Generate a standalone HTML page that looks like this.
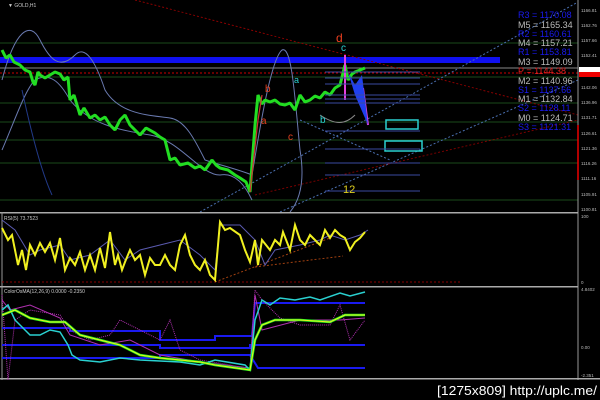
<!DOCTYPE html>
<html><head><meta charset="utf-8"><style>
html,body{margin:0;padding:0;background:#000;width:600px;height:400px;overflow:hidden}
svg{display:block}
text{font-family:"Liberation Sans",sans-serif}
</style></head><body>
<svg width="600" height="400" viewBox="0 0 600 400" xmlns="http://www.w3.org/2000/svg">
<rect width="600" height="400" fill="#000"/>
<g fill="none">
<line x1="0" y1="43" x2="578" y2="43" stroke="#1a4a1a"/>
<line x1="0" y1="103" x2="578" y2="103" stroke="#1a4a1a"/>
<line x1="0" y1="122" x2="578" y2="122" stroke="#1a4a1a"/>
<line x1="0" y1="140" x2="578" y2="140" stroke="#1a4a1a"/>
<line x1="0" y1="163" x2="578" y2="163" stroke="#1a4a1a"/>
<line x1="0" y1="200" x2="578" y2="200" stroke="#1a4a1a"/>
<line x1="0" y1="77" x2="578" y2="77" stroke="#1a4a1a"/>
<rect x="0" y="57" width="500" height="6" fill="#1010f0"/>
<line x1="0" y1="68" x2="578" y2="68" stroke="#888"/>
<line x1="0" y1="73" x2="578" y2="73" stroke="#c00" stroke-dasharray="2,2"/>
<line x1="135" y1="0" x2="578" y2="115" stroke="#800" stroke-dasharray="2,2"/>
<line x1="200" y1="212" x2="578" y2="2" stroke="#4a6fb0" stroke-dasharray="2,2"/>
<line x1="280" y1="212" x2="578" y2="80" stroke="#4a6fb0" stroke-dasharray="2,2"/>
<line x1="255" y1="195" x2="578" y2="120" stroke="#c00" stroke-dasharray="2,2" opacity=".6"/>
<line x1="300" y1="120" x2="390" y2="160" stroke="#4a6fb0" stroke-dasharray="2,2"/>
<path d="M2,80 C15,30 30,20 40,40 C50,60 60,70 75,55 C85,45 95,60 105,90 C120,115 150,115 170,118 C185,120 195,140 205,160 C220,165 240,170 252,175 C258,140 270,60 282,50 C292,45 295,100 300,150 C305,180 300,200 290,212" stroke="#6a7ab0"/>
<path d="M2,150 C15,120 25,90 35,80 C50,72 60,82 70,100 C90,125 120,130 150,135 C180,140 200,175 220,175 C235,172 245,185 252,200" stroke="#6a7ab0"/>
<path d="M22,90 C35,150 45,180 52,195" stroke="#223a88"/>
<path d="M2,50 L6,58 L10,55 L14,62 L20,65 L25,70 L30,72 L33,82 L35,85 L38,72 L40,75 L45,78 L50,75 L55,72 L60,74 L64,80 L68,77 L70,100 L74,95 L80,115 L84,108 L90,118 L95,115 L100,120 L105,117 L110,125 L115,130 L120,120 L125,115 L130,125 L135,130 L140,135 L146,128 L155,133 L160,137 L165,140 L170,160 L175,158 L180,165 L188,163 L195,168 L200,166 L205,170 L212,160 L216,165 L220,168 L228,170 L235,175 L240,178 L246,182 L250,192 L255,125 L258,95 L262,104 L265,100 L270,102 L275,100 L280,104 L285,105 L290,103 L295,110 L300,95 L305,102 L310,100 L315,96 L320,98 L325,92 L330,95 L335,88 L340,85 L345,65 L348,80 L352,74 L355,72 L360,70 L365,68" stroke="#22dd22" stroke-width="3" stroke-linejoin="bevel"/>
<path d="M250,192 L258,120 L262,95" stroke="#c33" stroke-width="1.2"/>
<path d="M345,55 L345,100 M363,88 L368,125" stroke="#e040e0" stroke-width="2"/>
<path d="M348,72 L355,85 L362,75 L368,125 L355,95 Z" fill="#2040f0" stroke="none"/>
<path d="M320,115 C335,125 345,125 355,115" stroke="#888"/>
<rect x="386" y="120" width="32" height="9" stroke="#2ad0d0" stroke-width="1.5"/>
<rect x="385" y="141" width="37" height="10" stroke="#2ad0d0" stroke-width="1.5"/>
<g stroke="#3a4aa0">
<line x1="325" y1="72" x2="420" y2="72"/><line x1="325" y1="78" x2="420" y2="78"/><line x1="325" y1="84" x2="420" y2="84"/>
<line x1="325" y1="95" x2="420" y2="95"/><line x1="325" y1="99" x2="420" y2="99"/><line x1="325" y1="103" x2="420" y2="103"/>
<line x1="325" y1="131" x2="420" y2="131"/><line x1="325" y1="149" x2="420" y2="149"/>
<line x1="325" y1="163" x2="420" y2="163"/><line x1="325" y1="175" x2="420" y2="175"/><line x1="325" y1="191" x2="420" y2="191"/>
</g>
</g>
<g font-size="10">
<text x="336" y="42" fill="#f04020" font-size="12">d</text>
<text x="341" y="51" fill="#2ad0d0">c</text>
<text x="265" y="92" fill="#e04020">b</text>
<text x="261" y="124" fill="#e04020">a</text>
<text x="288" y="140" fill="#e04020">c</text>
<text x="294" y="83" fill="#2ad0d0" font-size="9">a</text>
<text x="320" y="123" fill="#2ad0d0">b</text>
<text x="343" y="193" fill="#e0d020" font-size="11">12</text>
<text x="8" y="7" fill="#ccc" font-size="5">▼ GOLD,H1</text>
</g>
<g font-size="9" font-family="Liberation Sans">
<text x="518" y="18" fill="#1a1af0">R3 = 1170.08</text>
<text x="518" y="28" fill="#bbb">M5 = 1165.34</text>
<text x="518" y="37" fill="#1a1af0">R2 = 1160.61</text>
<text x="518" y="46" fill="#bbb">M4 = 1157.21</text>
<text x="518" y="55" fill="#1a1af0">R1 = 1153.81</text>
<text x="518" y="65" fill="#bbb">M3 = 1149.09</text>
<text x="518" y="74" fill="#e02020">P  = 1144.38</text>
<text x="518" y="84" fill="#bbb">M2 = 1140.96</text>
<text x="518" y="93" fill="#1a1af0">S1 = 1137.66</text>
<text x="518" y="102" fill="#bbb">M1 = 1132.84</text>
<text x="518" y="111" fill="#1a1af0">S2 = 1128.11</text>
<text x="518" y="121" fill="#bbb">M0 = 1124.71</text>
<text x="518" y="130" fill="#1a1af0">S3 = 1121.31</text>
</g>
<line x1="578" y1="0" x2="578" y2="380" stroke="#999"/>
<rect x="579" y="67" width="21" height="5" fill="#fff"/>
<rect x="579" y="72" width="21" height="5" fill="#e00"/>
<line x1="578" y1="125" x2="578" y2="180" stroke="#e00" stroke-width="1.5"/>
<g fill="#bbb" font-size="4.5">
<text x="581" y="12">1166.81</text><text x="581" y="27">1162.76</text><text x="581" y="42">1157.66</text><text x="581" y="57">1152.41</text>
<text x="581" y="89">1142.06</text><text x="581" y="104">1136.96</text><text x="581" y="119">1131.71</text><text x="581" y="135">1126.61</text>
<text x="581" y="150">1121.36</text><text x="581" y="165">1116.26</text><text x="581" y="180">1111.16</text><text x="581" y="196">1105.91</text><text x="581" y="211">1100.81</text>
<text x="581" y="218">100</text><text x="581" y="284">0</text><text x="581" y="291">4.8402</text><text x="581" y="349">0.00</text><text x="581" y="377">-2.351</text>
</g>
<rect x="0" y="212" width="578" height="1.5" fill="#aaa"/>
<rect x="0" y="286" width="578" height="1.5" fill="#aaa"/>
<rect x="0" y="378" width="600" height="1.5" fill="#aaa"/>
<line x1="2" y1="212" x2="2" y2="380" stroke="#999"/>
<text x="4" y="220" fill="#ccc" font-size="5">RSI(5) 73.7523</text>
<line x1="2" y1="282" x2="460" y2="282" stroke="#800" stroke-dasharray="2,2"/>
<line x1="215" y1="282" x2="330" y2="238" stroke="#a04010" stroke-dasharray="2,2"/>
<line x1="255" y1="267" x2="343" y2="256" stroke="#a04010" stroke-dasharray="2,2"/>
<polyline fill="none" stroke="#5a5ab0" points="2,220 15,230 30,255 40,250 60,245 70,260 90,255 110,240 125,260 140,250 160,245 180,240 200,255 215,270 220,225 240,225 255,240 265,265 275,250 300,245 320,240 330,235 345,240 360,235 368,230"/>
<polyline fill="none" stroke="#f0f020" stroke-width="2" points="2,228 8,240 12,235 18,265 22,250 26,270 30,245 35,255 40,243 45,252 50,243 55,260 60,238 65,270 70,258 75,265 80,252 85,270 90,255 95,270 100,248 105,268 110,232 115,265 118,255 122,270 125,262 130,250 135,260 140,255 145,275 150,258 155,265 160,265 165,255 170,265 175,270 180,245 185,235 190,255 195,265 200,270 205,260 210,275 215,280 220,222 225,230 230,228 240,235 245,250 250,262 255,240 258,265 262,240 266,245 270,250 275,240 280,245 283,232 290,250 295,225 300,240 305,245 310,235 315,240 320,245 325,230 330,238 335,230 340,235 345,238 350,250 355,242 360,238 365,232"/>
<text x="4" y="293" fill="#ccc" font-size="5">ColorOsMA(12,26,9) 0.0000 -0.2350</text>
<g fill="none">
<polyline stroke="#1a1af0" stroke-width="2" points="2,328 70,328 70,331 160,331 160,340 215,340 215,336 252,336 255,303 365,303"/>
<polyline stroke="#1a1af0" stroke-width="2" points="2,345 160,345 160,348 250,348 250,345 365,345"/>
<polyline stroke="#1a1af0" stroke-width="2" points="2,358 160,358 160,355 250,355 258,368 365,368"/>
<polyline stroke="#b030b0" stroke-dasharray="1,1" points="2,295 8,380 15,320 30,310 60,315 70,330 90,340 110,335 120,320 140,330 160,340 170,320 180,350 200,360 230,365 250,370 255,290 262,300 280,318 300,325 330,325 340,305 350,340 365,320"/>
<polyline stroke="#b030b0" points="2,300 10,310 30,305 60,318 70,335 100,345 130,340 160,355 200,362 250,368 255,295 262,330 300,320 340,320 365,318"/>
<polyline stroke="#2ad0d0" stroke-width="1.5" points="2,310 8,305 15,320 25,330 30,335 40,335 50,330 60,332 68,345 72,355 80,360 100,362 120,358 140,360 160,361 180,362 200,365 215,360 245,365 250,370 255,320 262,300 270,305 280,298 295,300 310,297 320,300 340,293 350,296 365,292"/>
<polyline stroke="#20f020" stroke-width="2.5" points="2,315 15,310 30,318 50,322 65,322 80,335 100,340 120,345 140,355 160,358 180,360 200,362 215,365 250,370 255,340 262,325 275,320 300,320 330,322 345,315 365,315"/>
<polyline stroke="#f0f020" stroke-width="1" points="2,315 15,310 30,318 50,322 65,322 80,335 100,340 120,345 140,355 160,358 180,360 200,362 215,365 250,370 255,340 262,325 275,320 300,320 330,322 345,315 365,315"/>
</g>
<text x="597" y="395" fill="#fff" font-size="13" text-anchor="end" font-family="Liberation Sans Narrow, Liberation Sans" textLength="160" lengthAdjust="spacingAndGlyphs">[1275x809] http://uplc.me/</text>
</svg>
</body></html>
